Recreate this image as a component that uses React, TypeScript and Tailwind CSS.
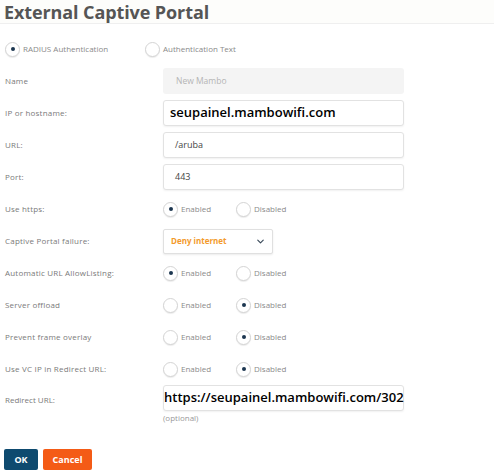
import { ChevronDown } from "lucide-react";

const Radio = ({ checked, label }: { checked: boolean; label: string }) => (
  <div className="flex items-center gap-[3px]">
    <div className="w-[15px] h-[15px] rounded-full border border-[#d4d4d4] bg-white shadow-[0_1px_1px_rgba(0,0,0,0.08)] flex items-center justify-center">
      {checked && <div className="w-[4px] h-[4px] rounded-full bg-[#1c3650]" />}
    </div>
    <span className="text-[8px] text-[#8a8a8a]">{label}</span>
  </div>
);

const Toggle = ({ enabled }: { enabled: boolean }) => (
  <div className="flex items-center">
    <div className="w-[73px]">
      <Radio checked={enabled} label="Enabled" />
    </div>
    <Radio checked={!enabled} label="Disabled" />
  </div>
);

const Row = ({ label, children }: { label: string; children: React.ReactNode }) => (
  <div className="flex items-center h-[26px] mb-[6px]">
    <div className="w-[158px] text-[8px] text-[#7a7a7a] tracking-[0.2px]">{label}</div>
    <div className="flex-1">{children}</div>
  </div>
);

const inputBox =
  "w-[241px] h-[26px] rounded-[3px] border border-[#e2e2e2] bg-white shadow-[0_1px_2px_rgba(0,0,0,0.06)] flex items-center";

export default function App() {
  return (
    <div className="w-[494px] h-[476px] bg-white font-['Open_Sans',sans-serif] overflow-hidden">
      <div className="h-[24px] bg-[#fdfdfb] border-b border-[#efefef] px-[4px] flex items-center">
        <h1 className="text-[18px] font-bold text-[#555555] leading-[24px] tracking-[-0.1px] pt-[1px]">
          External Captive Portal
        </h1>
      </div>

      <div className="px-[5px]">
        <div className="flex items-center h-[26px] mt-[12px] mb-[6px]">
          <div className="w-[140px]">
            <Radio checked label="RADIUS Authentication" />
          </div>
          <Radio checked={false} label="Authentication Text" />
        </div>

        <Row label="Name">
          <div className="w-[241px] h-[26px] rounded-[3px] bg-[#f4f4f4] flex items-center pl-[13px]">
            <span className="text-[8.5px] text-[#b5b5b5]">New Mambo</span>
          </div>
        </Row>

        <Row label="IP or hostname:">
          <div className={inputBox + " pl-[6px]"}>
            <span className="font-semibold text-[13px] text-black">seupainel.mambowifi.com</span>
          </div>
        </Row>

        <Row label="URL:">
          <div className={inputBox + " pl-[11px]"}>
            <span className="text-[9px] text-[#444]">/aruba</span>
          </div>
        </Row>

        <Row label="Port:">
          <div className={inputBox + " pl-[11px]"}>
            <span className="text-[9px] text-[#444]">443</span>
          </div>
        </Row>

        <Row label="Use https:">
          <Toggle enabled />
        </Row>

        <Row label="Captive Portal failure:">
          <div className="w-[110px] h-[25px] rounded-[2px] border border-[#e0e0e0] bg-white shadow-[0_1px_2px_rgba(0,0,0,0.08)] flex items-center justify-between pl-[7px] pr-[6px]">
            <span className="text-[8px] font-bold text-[#f39a2b]">Deny internet</span>
            <ChevronDown size={11} strokeWidth={2.5} className="text-[#3a4a5a]" />
          </div>
        </Row>

        <Row label="Automatic URL AllowListing:">
          <Toggle enabled />
        </Row>

        <Row label="Server offload">
          <Toggle enabled={false} />
        </Row>

        <Row label="Prevent frame overlay">
          <Toggle enabled={false} />
        </Row>

        <Row label="Use VC IP in Redirect URL:">
          <Toggle enabled={false} />
        </Row>

        <div className="flex items-start -mt-[3px]">
          <div className="w-[158px] text-[8px] text-[#7a7a7a] pt-[9px]">Redirect URL:</div>
          <div>
            <div className={inputBox + " pl-0"}>
              <span className="font-semibold text-[13px] text-black whitespace-nowrap">
                https://seupainel.mambowifi.com/302
              </span>
            </div>
            <div className="text-[8px] text-[#999] mt-[1px]">(optional)</div>
          </div>
        </div>

        <div className="flex gap-[5px] mt-[25px] -ml-[1px]">
          <button className="w-[34px] h-[21px] rounded-[2px] bg-[#0e4a6f] text-white text-[9px] font-bold">
            OK
          </button>
          <button className="w-[49px] h-[21px] rounded-[2px] bg-[#f45b16] text-white text-[9px] font-bold">
            Cancel
          </button>
        </div>
      </div>
    </div>
  );
}
